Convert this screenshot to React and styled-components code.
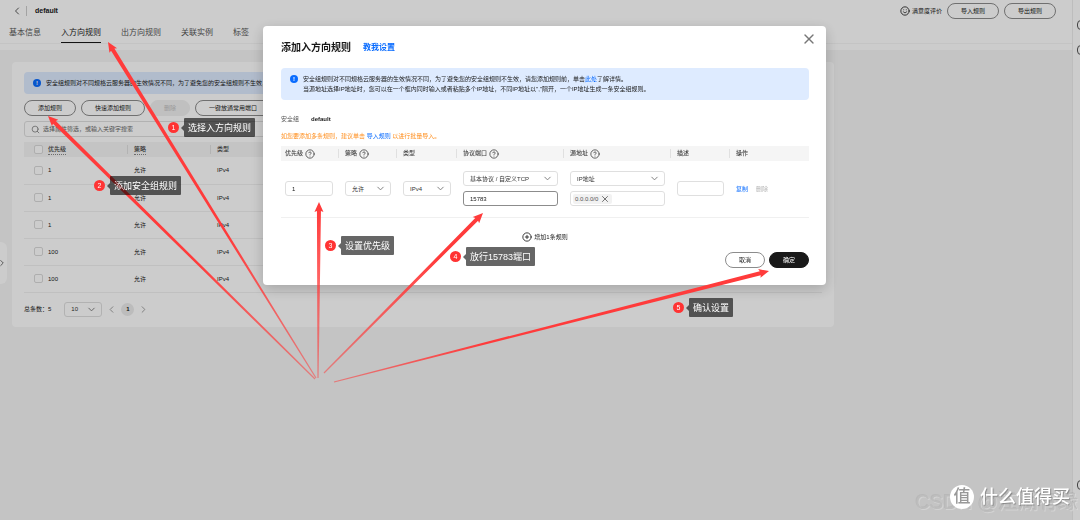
import React from "react";
import styled, { createGlobalStyle } from "styled-components";
import {
  ChevronLeft,
  ChevronRight,
  ChevronDown,
  Search,
  X,
  CirclePlus,
  CircleHelp,
  Smile,
} from "lucide-react";

const GlobalStyle = createGlobalStyle`
  * {
    box-sizing: border-box;
  }

  body {
    margin: 0;
    overflow: hidden;
    background: #f5f5f5;
    color: #191919;
    font-family: "Liberation Sans", "Noto Sans CJK SC", sans-serif;
    font-size: 6px;
    line-height: 10px;
  }

  button, input, select {
    font: inherit;
    color: inherit;
    margin: 0;
    padding: 0;
  }

  h1, h2, p {
    margin: 0;
    font-size: inherit;
  }

  svg {
    display: block;
    flex: none;
  }
`;

const Page = styled.div`
  display: flex;
  min-height: 100vh;
  position: relative;
`;

const Main = styled.main`
  flex: 1;
  min-width: 0;
`;

const Rail = styled.aside`
  width: 8px;
  padding: 20px 0 30px 4px;
  overflow: hidden;
  display: flex;
  flex-direction: column;
  gap: 15px;
  background: #fff;
  border-left: 1px solid #ededed;
`;

const RailIcon = styled.span`
  flex: none;
  width: 10px;
  height: 10px;
  border: 1px solid #555;
  border-radius: 4px;

  &:last-child {
    margin-top: auto;
  }
`;

const Header = styled.header`
  background: #fff;
  padding-bottom: 6px;
`;

const TitleBar = styled.div`
  display: flex;
  align-items: center;
  justify-content: space-between;
  padding: 3px 16px 0 11px;
`;

const Group = styled.div`
  display: flex;
  align-items: center;
  gap: ${(props) => props.$gap || 5}px;
`;

const IconButton = styled.button`
  display: flex;
  border: 0;
  background: none;
  color: ${(props) => props.$color || "#595959"};
`;

const Crumb = styled.h1`
  font-size: 7px;
  font-weight: 700;
  padding-left: 8px;
  border-left: 1px solid #ccc;
`;

const Pill = styled.button`
  height: 16px;
  padding: 0 ${(props) => props.$pad || 13}px;
  white-space: nowrap;
  border: 1px solid ${(props) => (props.$dark ? "#191919" : "#8c8c8c")};
  border-radius: 8px;
  background: ${(props) => (props.$dark ? "#191919" : "#fff")};
  color: ${(props) => (props.$dark ? "#fff" : "#191919")};

  &:disabled {
    border-color: #f0f0f0;
    background: #f0f0f0;
    color: #c2c2c2;
  }
`;

const Tabs = styled.nav`
  display: flex;
  gap: 20px;
  padding: 7px 9px 0;
  border-bottom: 1px solid #f5f5f5;
`;

const Tab = styled.a`
  padding: 2px 0 4px;
  font-size: 8px;
  line-height: 10px;
  text-decoration: none;
  color: ${(props) => (props.$active ? "#191919" : "#555")};
  border-bottom: 1px solid ${(props) => (props.$active ? "#191919" : "transparent")};
`;

const Card = styled.section`
  max-width: 822px;
  margin: 12px;
  padding: 10px 12px;
  background: #fff;
  border-radius: 4px;
`;

const Alert = styled.div`
  display: flex;
  gap: 5px;
  padding: 6px 9px;
  border-radius: 4px;
  background: #deebff;
`;

const InfoMark = styled.span`
  flex: none;
  width: 8px;
  height: 8px;
  margin-top: 1px;
  border-radius: 50%;
  background: #0a6cff;
  color: #fff;
  font-weight: 700;
  line-height: 8px;
  text-align: center;
`;

const Actions = styled.div`
  display: flex;
  gap: 5px;
  margin: 6px 0 5px;
`;

const SearchBox = styled.label`
  display: flex;
  align-items: center;
  gap: 3px;
  height: 16px;
  padding: 0 6px;
  border: 1px solid #dfdfdf;
  border-radius: 3px;
  color: #777;

  input {
    flex: 1;
    border: 0;
    background: none;
  }

  input::placeholder {
    color: #666;
    opacity: 1;
  }
`;

const Table = styled.table`
  width: 100%;
  table-layout: fixed;
  border-collapse: collapse;

  th {
    height: 15px;
    padding: 0 6px;
    text-align: left;
    font-weight: 500;
    background: #f5f5f5;
    color: #444;
  }

  td {
    padding: 0 6px;
    border-bottom: 1px solid #f0f0f0;
  }
`;

const RuleTable = styled(Table)`
  margin-top: 5px;

  td {
    height: 27px;
  }

  th:first-child,
  td:first-child {
    padding-left: 10px;
  }
`;

const FormTable = styled(Table)`
  margin-top: 5px;

  td {
    height: 56px;
  }

  th:first-child,
  td:first-child {
    padding-left: 4px;
  }
`;

const HeadCell = styled.span`
  display: flex;
  align-items: center;
  gap: 2px;
  position: relative;

  &::before {
    content: "";
    display: ${(props) => (props.$first ? "none" : "block")};
    position: absolute;
    left: -7px;
    height: 9px;
    border-left: 1px solid #e0e0e0;
  }

  em {
    font-style: normal;
    border-bottom: ${(props) => (props.$dotted ? "1px dotted #888" : "0")};
    line-height: 9px;
  }
`;

const CheckLabel = styled.label`
  display: flex;
  align-items: center;
  gap: 5px;
`;

const Check = styled.input.attrs({ type: "checkbox" })`
  appearance: none;
  width: 9px;
  height: 9px;
  border: 1px solid #dadada;
  border-radius: 2px;
  background: #fff;
`;

const Pager = styled.footer`
  display: flex;
  align-items: center;
  gap: 4px;
  padding-top: 9px;
  height: 24px;
`;

const Current = styled.span`
  width: 13px;
  height: 13px;
  border-radius: 50%;
  background: #ebebeb;
  line-height: 13px;
  text-align: center;
  font-weight: 700;
`;

const SelectBox = styled.span`
  display: flex;
  align-items: center;
  position: relative;
  width: ${(props) => props.$width || "100%"};
  margin-left: ${(props) => props.$indent || 0}px;

  select {
    appearance: none;
    width: 100%;
    height: 15px;
    padding: 0 6px;
    border: 1px solid #dfdfdf;
    border-radius: 3px;
    background: #fff;
    color: #333;
  }

  svg {
    position: absolute;
    right: 5px;
    color: #777;
    pointer-events: none;
  }
`;

const Field = styled.input`
  display: block;
  width: 100%;
  height: 15px;
  padding: 0 6px !important;
  border: 1px solid ${(props) => (props.$active ? "#8c8c8c" : "#dfdfdf")};
  border-radius: 3px;
  background: #fff;
`;

const Stack = styled.div`
  display: flex;
  flex-direction: column;
  gap: 5px;
`;

const ChipBox = styled.div`
  display: flex;
  align-items: center;
  height: 15px;
  padding: 0 2px;
  border: 1px solid #dfdfdf;
  border-radius: 3px;

  input {
    flex: 1;
    min-width: 0;
    border: 0;
    background: none;
  }
`;

const Chip = styled.span`
  display: flex;
  align-items: center;
  gap: 2px;
  padding: 0 2px;
  border-radius: 2px;
  background: #f2f2f2;
  color: #555;
`;

const SideHandle = styled.button`
  position: absolute;
  left: 0;
  top: 242px;
  width: 7px;
  height: 42px;
  border: 0;
  border-radius: 0 6px 6px 0;
  background: #fff;
  color: #555;

  svg {
    margin-left: -3px;
  }
`;

const Overlay = styled.div`
  position: fixed;
  inset: 0;
  display: flex;
  align-items: flex-start;
  justify-content: center;
  padding: 26px 0 0 9px;
  background: rgba(0, 0, 0, 0.2);
`;

const Modal = styled.section`
  width: 52.5%;
  min-width: 563px;
  padding: 15px 17px 17px 18px;
  border-radius: 4px;
  background: #fff;
  box-shadow: 0 4px 14px rgba(0, 0, 0, 0.2);
`;

const ModalHead = styled.div`
  display: flex;
  align-items: flex-start;
  margin-bottom: 13px;

  h2 {
    flex: none;
    font-size: 10px;
    line-height: 14px;
    font-weight: 700;
  }

  a {
    flex: 1;
    margin-left: 12px;
    font-size: 8px;
    line-height: 14px;
    font-weight: 700;
  }

  button {
    margin: -10px -8px 0 0;
  }
`;

const Link = styled.a`
  color: #0a6cff;
  text-decoration: none;
`;

const GroupLine = styled.p`
  display: flex;
  gap: 12px;
  margin-top: 14px;
  color: #555;

  strong {
    color: #191919;
  }
`;

const Hint = styled.p`
  margin-top: 7px;
  color: #ff8f1f;
`;

const AddRow = styled.button`
  display: flex;
  align-items: center;
  gap: 2px;
  margin: 14px auto 10px;
  border: 0;
  background: none;
`;

const ModalFoot = styled.div`
  display: flex;
  justify-content: flex-end;
  gap: 4px;
`;

const Arrows = styled.svg`
  position: fixed;
  left: 0;
  top: 0;
  pointer-events: none;
`;

const Callout = styled.div`
  position: fixed;
  left: ${(props) => props.$x}px;
  top: ${(props) => props.$y}px;
  display: flex;
  align-items: center;
  color: #fff;

  b {
    width: 11px;
    height: 11px;
    margin-right: 2px;
    border-radius: 50%;
    background: #ff3333;
    font-size: 7px;
    line-height: 11px;
    font-weight: 400;
    text-align: center;
  }

  i {
    border: 3px solid transparent;
    border-left: 0;
    border-right-color: rgba(0, 0, 0, 0.6);
  }

  span {
    padding: 4px 4px 3px;
    border-radius: 1px;
    background: rgba(0, 0, 0, 0.6);
    font-size: 9px;
    line-height: 12px;
    white-space: nowrap;
  }
`;

const FaintMark = styled.div`
  position: fixed;
  right: 2px;
  bottom: 6px;
  font-size: 20px;
  line-height: 24px;
  white-space: nowrap;
  color: #bdbdbd;
  text-shadow: 1px 1px 0 rgba(255, 255, 255, 0.25), -1px -1px 0 rgba(0, 0, 0, 0.06);
`;

const Brand = styled.div`
  position: fixed;
  right: 10px;
  bottom: 11px;
  display: flex;
  align-items: center;
  gap: 6px;
  color: #fff;
  font-size: 18px;
  line-height: 24px;
  font-weight: 500;
  text-shadow: 1px 1px 1px rgba(0, 0, 0, 0.3);

  b {
    width: 24px;
    height: 24px;
    border-radius: 50%;
    background: #fff;
    color: #999;
    font-size: 17px;
    font-weight: 500;
    line-height: 23px;
    text-align: center;
    text-shadow: none;
  }
`;

const tabs = ["基本信息", "入方向规则", "出方向规则", "关联实例", "标签"];

const rules = [
  { priority: 1, action: "允许", type: "IPv4" },
  { priority: 1, action: "允许", type: "IPv4" },
  { priority: 1, action: "允许", type: "IPv4" },
  { priority: 100, action: "允许", type: "IPv4" },
  { priority: 100, action: "允许", type: "IPv4" },
];

const columns = [
  { name: "优先级", width: 58, help: true },
  { name: "策略", width: 58, help: true },
  { name: "类型", width: 60 },
  { name: "协议端口", width: 107, help: true },
  { name: "源地址", width: 107, help: true },
  { name: "描述", width: 59 },
  { name: "操作" },
];

const arrows = [
  { from: [316, 378], to: [108, 42] },
  { from: [315, 379], to: [48, 116] },
  { from: [318, 378], to: [319, 202] },
  { from: [324, 373], to: [483, 213] },
  { from: [334, 382], to: [769, 271] },
];

const callouts = [
  { x: 168, y: 118, text: "选择入方向规则" },
  { x: 94, y: 176, text: "添加安全组规则" },
  { x: 325, y: 236, text: "设置优先级" },
  { x: 450, y: 247, text: "放行15783端口" },
  { x: 673, y: 298, text: "确认设置" },
];

// a shaft that widens towards its head
function arrowPoints([x1, y1], [x2, y2]) {
  const length = Math.hypot(x2 - x1, y2 - y1);
  const dx = (x2 - x1) / length;
  const dy = (y2 - y1) / length;
  const at = (along, side) =>
    `${x1 + dx * along - dy * side},${y1 + dy * along + dx * side}`;
  const neck = length - 9;
  return [
    at(0, 0.6),
    at(neck, 2),
    at(neck - 1, 4.5),
    at(length, 0),
    at(neck - 1, -4.5),
    at(neck, -2),
    at(0, -0.6),
  ].join(" ");
}

function Select({ label, value, width, indent }) {
  return (
    <SelectBox $width={width} $indent={indent}>
      <select aria-label={label} defaultValue={value}>
        <option>{value}</option>
      </select>
      <ChevronDown size={11} />
    </SelectBox>
  );
}

function SecurityGroup() {
  return (
    <Main>
      <Header>
        <TitleBar>
          <Group $gap={3}>
            <IconButton aria-label="返回">
              <ChevronLeft size={12} />
            </IconButton>
            <Crumb>default</Crumb>
          </Group>
          <Group $gap={5}>
            <Group $gap={2}>
              <Smile size={10} />
              <span>满意度评价</span>
            </Group>
            <Pill>导入规则</Pill>
            <Pill>导出规则</Pill>
          </Group>
        </TitleBar>
        <Tabs>
          {tabs.map((tab, i) => (
            <Tab href="#" key={tab} $active={i === 1}>
              {tab}
            </Tab>
          ))}
        </Tabs>
      </Header>

      <Card>
        <Alert>
          <InfoMark>!</InfoMark>
          <p>
            安全组规则对不同规格云服务器的生效情况不同，为了避免您的安全组规则不生效，请您添加规则前，单击此处了解详情。
          </p>
        </Alert>
        <Actions>
          <Pill>添加规则</Pill>
          <Pill>快速添加规则</Pill>
          <Pill disabled>删除</Pill>
          <Pill>一键放通常用端口</Pill>
        </Actions>
        <SearchBox>
          <Search size={9} />
          <input placeholder="选择属性筛选，或输入关键字搜索" aria-label="搜索" />
        </SearchBox>
        <RuleTable>
          <colgroup>
            <col width="104" />
            <col width="83" />
            <col />
          </colgroup>
          <thead>
            <tr>
              <th>
                <CheckLabel>
                  <Check />
                  <HeadCell $first $dotted>
                    <em>优先级</em>
                  </HeadCell>
                </CheckLabel>
              </th>
              <th>
                <HeadCell $dotted>
                  <em>策略</em>
                </HeadCell>
              </th>
              <th>
                <HeadCell>
                  <em>类型</em>
                </HeadCell>
              </th>
            </tr>
          </thead>
          <tbody>
            {rules.map((rule, i) => (
              <tr key={i}>
                <td>
                  <CheckLabel>
                    <Check />
                    {rule.priority}
                  </CheckLabel>
                </td>
                <td>{rule.action}</td>
                <td>{rule.type}</td>
              </tr>
            ))}
          </tbody>
        </RuleTable>
        <Pager>
          <span>总条数：5</span>
          <Select label="每页条数" value="10" width="38px" indent={9} />
          <IconButton aria-label="上一页" $color="#999">
            <ChevronLeft size={11} />
          </IconButton>
          <Current>1</Current>
          <IconButton aria-label="下一页" $color="#999">
            <ChevronRight size={11} />
          </IconButton>
        </Pager>
      </Card>
    </Main>
  );
}

function RuleDialog() {
  return (
    <Modal role="dialog" aria-labelledby="dialog-title">
      <ModalHead>
        <h2 id="dialog-title">添加入方向规则</h2>
        <Link href="#">教我设置</Link>
        <IconButton aria-label="关闭" $color="#777">
          <X size={16} strokeWidth={2} />
        </IconButton>
      </ModalHead>
      <Alert>
        <InfoMark>!</InfoMark>
        <div>
          <p>
            安全组规则对不同规格云服务器的生效情况不同，为了避免您的安全组规则不生效，请您添加规则前，单击
            <Link href="#">此处</Link>了解详情。
          </p>
          <p>
            当源地址选择IP地址时，您可以在一个框内同时输入或者粘贴多个IP地址，不同IP地址以","隔开，一个IP地址生成一条安全组规则。
          </p>
        </div>
      </Alert>
      <GroupLine>
        <span>安全组</span>
        <strong>default</strong>
      </GroupLine>
      <Hint>
        如您要添加多条规则，建议单击 <Link href="#">导入规则</Link> 以进行批量导入。
      </Hint>
      <FormTable>
        <colgroup>
          {columns.map((column) => (
            <col key={column.name} width={column.width} />
          ))}
        </colgroup>
        <thead>
          <tr>
            {columns.map((column, i) => (
              <th key={column.name}>
                <HeadCell $first={i === 0}>
                  <em>{column.name}</em>
                  {column.help && <CircleHelp size={10} />}
                </HeadCell>
              </th>
            ))}
          </tr>
        </thead>
        <tbody>
          <tr>
            <td>
              <Field aria-label="优先级" defaultValue="1" />
            </td>
            <td>
              <Select label="策略" value="允许" />
            </td>
            <td>
              <Select label="类型" value="IPv4" />
            </td>
            <td>
              <Stack>
                <Select label="协议" value="基本协议 / 自定义TCP" />
                <Field aria-label="端口" defaultValue="15783" $active />
              </Stack>
            </td>
            <td>
              <Stack>
                <Select label="源地址类型" value="IP地址" />
                <ChipBox>
                  <Chip>
                    0.0.0.0/0
                    <IconButton aria-label="移除">
                      <X size={10} />
                    </IconButton>
                  </Chip>
                  <input aria-label="源地址" />
                </ChipBox>
              </Stack>
            </td>
            <td>
              <Field aria-label="描述" />
            </td>
            <td>
              <Group $gap={8}>
                <IconButton $color="#0a6cff">复制</IconButton>
                <IconButton $color="#b5b5b5" disabled>
                  删除
                </IconButton>
              </Group>
            </td>
          </tr>
        </tbody>
      </FormTable>
      <AddRow>
        <CirclePlus size={10} />
        增加1条规则
      </AddRow>
      <ModalFoot>
        <Pill>取消</Pill>
        <Pill $dark>确定</Pill>
      </ModalFoot>
    </Modal>
  );
}

export default function App() {
  return (
    <>
      <GlobalStyle />
      <Page>
        <SecurityGroup />
        <Rail>
          <RailIcon />
          <RailIcon />
          <RailIcon />
        </Rail>
        <SideHandle aria-label="展开">
          <ChevronRight size={10} />
        </SideHandle>
      </Page>
      <Overlay>
        <RuleDialog />
      </Overlay>
      <Arrows width="840" height="400">
        <defs>
          <radialGradient
            id="fade"
            gradientUnits="userSpaceOnUse"
            cx="318"
            cy="379"
            r="170"
          >
            <stop offset="0" stopColor="#ff3b3b" stopOpacity="0.5" />
            <stop offset="1" stopColor="#ff3b3b" />
          </radialGradient>
        </defs>
        {arrows.map((arrow, i) => (
          <polygon
            key={i}
            points={arrowPoints(arrow.from, arrow.to)}
            fill="url(#fade)"
          />
        ))}
      </Arrows>
      {callouts.map((callout, i) => (
        <Callout key={callout.text} $x={callout.x} $y={callout.y}>
          <b>{i + 1}</b>
          <i />
          <span>{callout.text}</span>
        </Callout>
      ))}
      <FaintMark>CSDN @江湖有缘</FaintMark>
      <Brand>
        <b>值</b>
        什么值得买
      </Brand>
    </>
  );
}
